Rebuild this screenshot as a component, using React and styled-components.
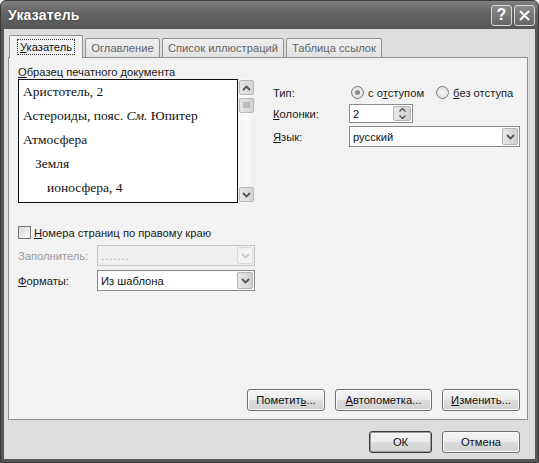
import styled, { createGlobalStyle } from "styled-components";

const GlobalStyle = createGlobalStyle`
  html, body {
    margin: 0;
    padding: 0;
    background: #ffffff;
  }
  body {
    font-family: "Liberation Sans", Arial, sans-serif;
    font-size: 11.2px;
    color: #1a1a1a;
  }
`;

const Window = styled.div`
  width: 539px;
  height: 463px;
  box-sizing: border-box;
  display: flex;
  flex-direction: column;
  background: #575757;
  border: 1px solid #3a3a3a;
  border-radius: 6px 6px 0 0;
  overflow: hidden;
`;

const TitleBar = styled.div`
  height: 28px;
  flex: none;
  display: flex;
  align-items: center;
  padding: 0 3px 0 7px;
  background: linear-gradient(#808080, #626262 45%, #575757);
`;

const Title = styled.span`
  flex: 1;
  color: #ffffff;
  font-weight: bold;
  font-size: 14px;
  letter-spacing: 0.2px;
  text-shadow: 0 0 2px #333;
`;

const CaptionButton = styled.div`
  width: 21px;
  height: 21px;
  margin-left: 2px;
  box-sizing: border-box;
  border: 1px solid #d8d8d8;
  border-radius: 3px;
  background: linear-gradient(#8a8a8a, #666);
  color: #fff;
  display: flex;
  align-items: center;
  justify-content: center;
  font-size: 16px;
  font-weight: bold;
`;

const Client = styled.div`
  flex: 1;
  margin: 0 3px 3px 3px;
  background: #dddddd;
  display: flex;
  flex-direction: column;
  padding: 6px 7px 0 4px;
`;

const TabRow = styled.div`
  display: flex;
  align-items: flex-end;
  height: 23px;
  padding-left: 1px;
  position: relative;
  z-index: 1;
  margin-bottom: -1px;
`;

const Tab = styled.div`
  width: ${(p) => p.$w}px;
  height: ${(p) => (p.$active ? 23 : 20)}px;
  box-sizing: border-box;
  margin-right: 2px;
  display: flex;
  align-items: center;
  justify-content: center;
  border: 1px solid #8e8e8e;
  border-bottom: ${(p) => (p.$active ? "none" : "1px solid #8e8e8e")};
  border-radius: 2px 2px 0 0;
  background: ${(p) => (p.$active ? "#f2f2f2" : "linear-gradient(#f0f0f0, #e2e2e2)")};
  color: ${(p) => (p.$active ? "#111" : "#666")};
`;

const FocusText = styled.span`
  outline: 1px dotted #333;
  outline-offset: 1px;
  padding: 0 1px;
`;

const Panel = styled.div`
  height: 363px;
  box-sizing: border-box;
  border: 1px solid #8e8e8e;
  background: #f2f2f2;
  display: flex;
  flex-direction: column;
  padding: 8px 7px 8px 9px;
`;

const Columns = styled.div`
  display: flex;
  flex: 1;
`;

const LeftCol = styled.div`
  width: 237px;
  display: flex;
  flex-direction: column;
`;

const RightCol = styled.div`
  flex: 1;
  margin-left: 18px;
  padding-top: 18px;
  display: flex;
  flex-direction: column;
  gap: 3px;
`;

const Label = styled.div`
  color: ${(p) => (p.$disabled ? "#9a9a9a" : "#1a1a1a")};
  width: ${(p) => p.$w || "auto"};
  flex: none;
  white-space: nowrap;
`;

const U = styled.span`
  text-decoration: underline;
`;

const PreviewWrap = styled.div`
  display: flex;
  margin-top: 1px;
  height: 124px;
`;

const Preview = styled.div`
  width: 220px;
  box-sizing: border-box;
  background: #fff;
  border: 1px solid #111;
  padding: 0 0 0 4px;
  font-family: "Liberation Serif", "Times New Roman", serif;
  font-size: 13.5px;
  color: #111;
  overflow: hidden;
`;

const PreviewLine = styled.div`
  height: 24px;
  line-height: 24px;
  padding-left: ${(p) => p.$indent || 0}px;
  white-space: nowrap;
`;

const ScrollBar = styled.div`
  width: 17px;
  display: flex;
  flex-direction: column;
  align-items: center;
  background: linear-gradient(90deg, #f4f4f4, #fafafa, #eeeeee);
  padding: 1px 0;
`;

const ScrollBtn = styled.div`
  width: 15px;
  height: 15px;
  box-sizing: border-box;
  border: 1px solid #b8b8b8;
  border-radius: 2px;
  background: linear-gradient(90deg, #e6e6e6, #d4d4d4);
  display: flex;
  align-items: center;
  justify-content: center;
  margin-top: ${(p) => p.$mt || 0}px;
`;

const Spacer = styled.div`
  flex: 1;
`;

const CheckRow = styled.div`
  display: flex;
  align-items: center;
  gap: 3px;
  margin-top: 23px;
`;

const CheckBox = styled.div`
  width: 13px;
  height: 13px;
  box-sizing: border-box;
  border: 1px solid #777;
  background: linear-gradient(135deg, #d8d8d8, #f8f8f8);
`;

const FieldRow = styled.div`
  display: flex;
  align-items: center;
  margin-top: ${(p) => p.$mt || 0}px;
  height: ${(p) => p.$h || 20}px;
`;

const Combo = styled.div`
  flex: ${(p) => (p.$w ? "none" : 1)};
  width: ${(p) => p.$w || "auto"};
  height: ${(p) => p.$h || 21}px;
  box-sizing: border-box;
  border: 1px solid ${(p) => (p.$disabled ? "#c4c4c4" : "#8a8a8a")};
  background: ${(p) => (p.$disabled ? "#efefef" : "#fff")};
  display: flex;
  align-items: stretch;
  color: ${(p) => (p.$disabled ? "#a0a0a0" : "#111")};
`;

const ComboText = styled.div`
  flex: 1;
  display: flex;
  align-items: center;
  padding-left: 3px;
  letter-spacing: ${(p) => p.$ls || 0}px;
`;

const DropBtn = styled.div`
  width: 16px;
  margin: 1px;
  box-sizing: border-box;
  border: 1px solid ${(p) => (p.$disabled ? "#dadada" : "#b4b4b4")};
  border-radius: 2px;
  background: ${(p) => (p.$disabled ? "#f2f2f2" : "linear-gradient(90deg, #e8e8e8, #d0d0d0)")};
  display: flex;
  align-items: center;
  justify-content: center;
`;

const SpinBtns = styled.div`
  width: 16px;
  margin: 1px;
  display: flex;
  flex-direction: column;
  border: 1px solid #b4b4b4;
  border-radius: 2px;
  background: linear-gradient(90deg, #e8e8e8, #d0d0d0);
  align-items: center;
  justify-content: space-around;
`;

const RadioGroup = styled.div`
  display: flex;
  align-items: center;
  gap: 4px;
  margin-right: ${(p) => p.$mr || 0}px;
`;

const Radio = styled.div`
  width: 13px;
  height: 13px;
  box-sizing: border-box;
  border-radius: 50%;
  border: 1px solid #7a7a7a;
  background: radial-gradient(circle, #f8f8f8, #d6d6d6);
  display: flex;
  align-items: center;
  justify-content: center;
  &::after {
    content: "";
    display: ${(p) => (p.$checked ? "block" : "none")};
    width: 5px;
    height: 5px;
    border-radius: 50%;
    background: #8a8a8a;
  }
`;

const ButtonRow = styled.div`
  display: flex;
  justify-content: flex-end;
  gap: 10px;
`;

const Button = styled.div`
  width: ${(p) => p.$w}px;
  height: 22px;
  box-sizing: border-box;
  border: 1px solid ${(p) => (p.$default ? "#3c3c3c" : "#707070")};
  border-radius: 3px;
  background: linear-gradient(#f6f6f6 0%, #ebebeb 48%, #dcdcdc 52%, #d2d2d2 100%);
  box-shadow: inset 0 0 0 1px ${(p) => (p.$default ? "#9c9c9c" : "#fbfbfb")};
  display: flex;
  align-items: center;
  justify-content: center;
  color: #111;
`;

const Footer = styled.div`
  display: flex;
  justify-content: flex-end;
  gap: 10px;
  padding: 11px 8px 0 0;
`;

const Chevron = ({ up, color = "#555" }) => (
  <svg width="9" height="6" viewBox="0 0 9 6">
    <path
      d={up ? "M1 5 L4.5 1.5 L8 5" : "M1 1 L4.5 4.5 L8 1"}
      fill="none"
      stroke={color}
      strokeWidth="1.8"
    />
  </svg>
);

const SmallChevron = ({ up }) => (
  <svg width="7" height="4" viewBox="0 0 7 4">
    <path d={up ? "M0.5 3.5 L3.5 0.5 L6.5 3.5" : "M0.5 0.5 L3.5 3.5 L6.5 0.5"} fill="none" stroke="#555" strokeWidth="1.4" />
  </svg>
);

const Grip = () => (
  <svg width="7" height="7" viewBox="0 0 7 7">
    <path d="M0 1 H7 M0 3 H7 M0 5 H7" stroke="#999" strokeWidth="1" />
  </svg>
);

const tabs = [
  { label: "Указатель", w: 74 },
  { label: "Оглавление", w: 75 },
  { label: "Список иллюстраций", w: 122 },
  { label: "Таблица ссылок", w: 96 },
];

const previewLines = [
  { text: "Аристотель, 2" },
  {
    text: (
      <>
        Астероиды, пояс. <i>См.</i> Юпитер
      </>
    ),
  },
  { text: "Атмосфера" },
  { text: "Земля", indent: 12 },
  { text: "ионосфера, 4", indent: 24 },
];

export default function App() {
  return (
    <>
      <GlobalStyle />
      <Window>
        <TitleBar>
          <Title>Указатель</Title>
          <CaptionButton>?</CaptionButton>
          <CaptionButton>
            <svg width="11" height="11" viewBox="0 0 11 11">
              <path d="M1 1 L10 10 M10 1 L1 10" stroke="#fff" strokeWidth="2" />
            </svg>
          </CaptionButton>
        </TitleBar>
        <Client>
          <TabRow>
            {tabs.map((t, i) => (
              <Tab key={t.label} $w={t.w} $active={i === 0}>
                {i === 0 ? (
                  <FocusText>
                    <U>У</U>казатель
                  </FocusText>
                ) : (
                  t.label
                )}
              </Tab>
            ))}
          </TabRow>
          <Panel>
            <Columns>
              <LeftCol>
                <Label>
                  <U>О</U>бразец печатного документа
                </Label>
                <PreviewWrap>
                  <Preview>
                    {previewLines.map((l, i) => (
                      <PreviewLine key={i} $indent={l.indent}>
                        {l.text}
                      </PreviewLine>
                    ))}
                  </Preview>
                  <ScrollBar>
                    <ScrollBtn>
                      <Chevron up />
                    </ScrollBtn>
                    <ScrollBtn $mt={3}>
                      <Grip />
                    </ScrollBtn>
                    <Spacer />
                    <ScrollBtn>
                      <Chevron />
                    </ScrollBtn>
                  </ScrollBar>
                </PreviewWrap>
                <CheckRow>
                  <CheckBox />
                  <Label>
                    <U>Н</U>омера страниц по правому краю
                  </Label>
                </CheckRow>
                <FieldRow $mt={6} $h={21}>
                  <Label $disabled $w="79px">
                    Заполнитель:
                  </Label>
                  <Combo $disabled>
                    <ComboText $ls={1}>.......</ComboText>
                    <DropBtn $disabled>
                      <Chevron color="#c8c8c8" />
                    </DropBtn>
                  </Combo>
                </FieldRow>
                <FieldRow $mt={4} $h={21}>
                  <Label $w="79px">
                    <U>Ф</U>орматы:
                  </Label>
                  <Combo>
                    <ComboText>Из шаблона</ComboText>
                    <DropBtn>
                      <Chevron />
                    </DropBtn>
                  </Combo>
                </FieldRow>
              </LeftCol>
              <RightCol>
                <FieldRow $h={17}>
                  <Label $w="78px">Тип:</Label>
                  <RadioGroup $mr={12}>
                    <Radio $checked />
                    <Label>
                      с о<U>т</U>ступом
                    </Label>
                  </RadioGroup>
                  <RadioGroup>
                    <Radio />
                    <Label>
                      <U>б</U>ез отступа
                    </Label>
                  </RadioGroup>
                </FieldRow>
                <FieldRow $h={19}>
                  <Label $w="76px">
                    <U>К</U>олонки:
                  </Label>
                  <Combo $w="64px" $h={19}>
                    <ComboText>2</ComboText>
                    <SpinBtns>
                      <SmallChevron up />
                      <SmallChevron />
                    </SpinBtns>
                  </Combo>
                </FieldRow>
                <FieldRow $h={21}>
                  <Label $w="76px">
                    <U>Я</U>зык:
                  </Label>
                  <Combo>
                    <ComboText>русский</ComboText>
                    <DropBtn>
                      <Chevron />
                    </DropBtn>
                  </Combo>
                </FieldRow>
              </RightCol>
            </Columns>
            <ButtonRow>
              <Button $w={78}>
                Пометит<U>ь</U>...
              </Button>
              <Button $w={97}>
                <U>А</U>втопометка...
              </Button>
              <Button $w={78}>
                <U>И</U>зменить...
              </Button>
            </ButtonRow>
          </Panel>
          <Footer>
            <Button $w={63} $default>
              ОК
            </Button>
            <Button $w={78}>Отмена</Button>
          </Footer>
        </Client>
      </Window>
    </>
  );
}
